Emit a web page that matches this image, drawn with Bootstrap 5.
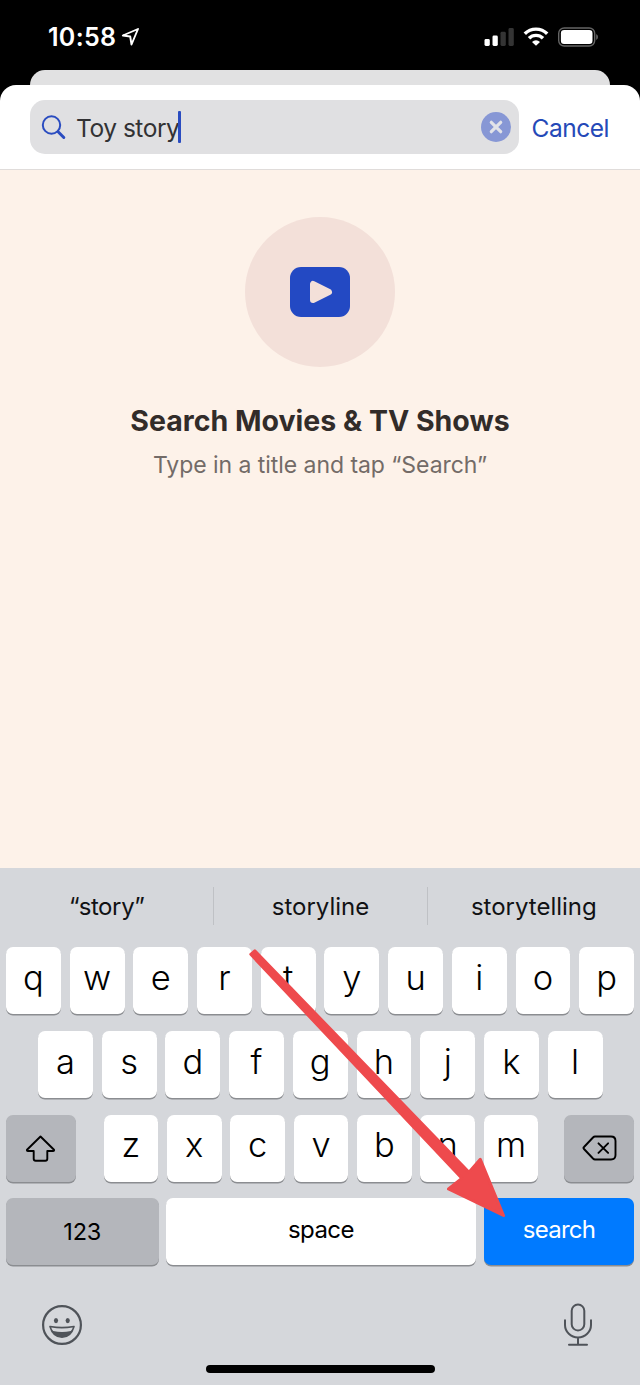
<!DOCTYPE html>
<html lang="en">
<head>
<meta charset="utf-8">
<meta name="viewport" content="width=device-width, initial-scale=1">
<title>Search Movies &amp; TV Shows</title>
<link href="https://cdn.jsdelivr.net/npm/bootstrap@5.3.0/dist/css/bootstrap.min.css" rel="stylesheet">
<style>
body{font-family:Inter,"Liberation Sans",sans-serif;background:#000;color:#000;line-height:1.2}
svg{display:block;flex:none}
.phone{width:640px;height:1385px;overflow:hidden}
.statusbar{height:70px;padding:3px 42px 0 48px}
.clock{font-size:25px;font-weight:600;letter-spacing:.3px}
.sheet-back{height:30px;margin:0 30px;background:#e1e1e2;border-radius:15px 15px 0 0}
.sheet{margin-top:-15px;background:#fff;border-radius:16px 16px 0 0;height:84px;padding:15px 31px 15px 30px;position:relative}
.field{width:489px;background:#e0e0e2;border-radius:15px;padding:0 8px 0 11px}
.query{font-size:24.5px;color:#323234;margin-left:10px;letter-spacing:-.47px;padding-top:3px}
.caret{width:3px;height:32px;background:#2a4cc0;border-radius:1px;margin-left:-1px}
.cancel{font-size:24.5px;color:#2549b8;letter-spacing:-.48px;padding-top:3px}
.empty{background:#fdf2e9;border-top:1px solid #e0dcda;height:699px;padding-top:47px}
.disc{width:150px;height:150px;background:#f3e0d9}
.title{font-size:28.5px;font-weight:700;color:#322c29;margin-top:37px}
.subtitle{font-size:23px;color:#736b67;margin-top:14px;letter-spacing:-.05px}
.keyboard{background:#d5d7db;height:517px}
.suggest{height:79px;padding-bottom:3px;font-size:24px;color:#111214}
.suggest>div{height:38px;padding-top:2px}
.suggest>div+div{border-left:1.5px solid #bfc1c5}
.tight{letter-spacing:-.4px}
.keys{gap:8.8px;height:68px;margin-bottom:15.8px;padding:0 6px}
.keys-inset{padding:0 37.5px 0 38px}
.keys-last{gap:8px}
.key{flex:1 1 0;min-width:0;background:#fff;border-radius:7px;box-shadow:0 1.5px 0 #8b8d91;font-size:34.5px;font-weight:350;padding-bottom:6px;height:67px;display:flex;align-items:center;justify-content:center}
.key-side{flex:0 0 69.6px}
.key-shift{margin-right:19.2px}
.key-del{margin-left:17.2px}
.key-dark{background:#b4b6bb;padding:0}
.key-word{font-size:24px;font-weight:400;padding-bottom:3px;letter-spacing:-.6px}
.key-num{flex:0 0 152.5px;font-size:23.5px;padding:0;letter-spacing:-.2px;margin-right:-.7px}
.key-go{flex:0 0 150px;background:#007aff;color:#fff;letter-spacing:-.75px}
.toolrow{padding:0 47px 0 41px;margin-top:37px}
.homebar{width:229px;height:8px;background:#000;margin-top:18px}
.pointer{left:240px;top:940px}
</style>
</head>
<body>
<div class="phone position-relative">
  <div class="statusbar d-flex align-items-center">
    <span class="clock text-white">10:58</span>
    <svg class="ms-1" width="22" height="20" viewBox="0 0 22 20" fill="none" stroke="#fff" stroke-width="1.9" stroke-linejoin="round"><path d="M18 2 2.800 8.500l7.400 1L11.500 17.500Z"/></svg>
    <svg class="ms-auto" width="116" height="20" viewBox="0 0 116 20"><g fill="#fff"><rect x="2.500" y="12" width="5.300" height="7" rx="1.400"/><rect x="10.500" y="8.600" width="5.300" height="10.400" rx="1.400"/><g fill="#343434"><rect x="18.500" y="4.800" width="5.300" height="14.200" rx="1.400"/><rect x="26.500" y="1" width="5.300" height="18" rx="1.400"/></g></g><g fill="none" stroke="#fff" stroke-width="3.400"><path d="M42.800 6.800a15.700 15.700 0 0 1 22.400 0M47 11.300a9.800 9.800 0 0 1 14 0"/></g><path d="M50 14.900a5.800 5.800 0 0 1 8 0L54 18.800Z" fill="#fff"/><rect x="76.700" y="1" width="36" height="18" rx="5.500" fill="none" stroke="#646464" stroke-width="1.400"/><rect x="78.900" y="3.100" width="31.600" height="13.800" rx="3.200" fill="#fff"/><path d="M114.200 7q1.800.8 1.800 3t-1.800 3Z" fill="#646464"/></svg>
  </div>
  <div class="sheet-back"></div>
  <div class="sheet d-flex justify-content-between">
    <div class="field d-flex align-items-center">
      <svg width="25" height="25" viewBox="0 0 25 25" fill="none" stroke="#2a4cc0" stroke-linecap="round"><circle cx="10.500" cy="10" r="8.700" stroke-width="2"/><path d="m17.100 16.800 5.700 5.700" stroke-width="3"/></svg>
      <span class="query">Toy story</span><span class="caret"></span>
      <svg class="ms-auto" width="30" height="30" viewBox="0 0 30 30"><circle cx="15" cy="15" r="15" fill="#8797d5"/><path d="m10.300 10.300 9.400 9.400m0-9.400-9.400 9.400" stroke="#e2e3e8" stroke-width="3.200" stroke-linecap="round"/></svg>
    </div>
    <span class="cancel align-self-center">Cancel</span>
  </div>
  <main class="empty d-flex flex-column align-items-center">
    <div class="disc rounded-circle d-flex align-items-center justify-content-center">
      <svg width="60" height="50" viewBox="0 0 60 50"><rect width="60" height="50" rx="11" fill="#2349c3"/><path d="M23 17v16L39 25Z" fill="#f3e0d9" stroke="#f3e0d9" stroke-width="6" stroke-linejoin="round"/></svg>
    </div>
    <div class="title">Search Movies &amp; TV Shows</div>
    <div class="subtitle">Type in a title and tap “Search”</div>
  </main>
  <div class="keyboard">
    <div class="suggest d-flex align-items-center">
      <div class="col-4 d-flex align-items-center justify-content-center tight">“story”</div>
      <div class="col-4 d-flex align-items-center justify-content-center">storyline</div>
      <div class="col-4 d-flex align-items-center justify-content-center">storytelling</div>
    </div>
    <div class="keys d-flex">
      <div class="key">q</div><div class="key">w</div><div class="key">e</div><div class="key">r</div><div class="key">t</div><div class="key">y</div><div class="key">u</div><div class="key">i</div><div class="key">o</div><div class="key">p</div>
    </div>
    <div class="keys keys-inset d-flex">
      <div class="key">a</div><div class="key">s</div><div class="key">d</div><div class="key">f</div><div class="key">g</div><div class="key">h</div><div class="key">j</div><div class="key">k</div><div class="key">l</div>
    </div>
    <div class="keys d-flex">
      <div class="key key-side key-dark key-shift"><svg width="32" height="30" viewBox="0 0 32 30" fill="none" stroke="#000" stroke-width="1.900" stroke-linejoin="round"><path d="M15.500 3.500 29 16.700q.5 1.300-1 1.300h-5.700v7.700q0 2-2 2h-9.600q-2 0-2-2v-7.700H3q-1.500 0-1-1.300Z"/></svg></div>
      <div class="key">z</div><div class="key">x</div><div class="key">c</div><div class="key">v</div><div class="key">b</div><div class="key">n</div><div class="key">m</div>
      <div class="key key-side key-dark key-del"><svg width="35" height="26" viewBox="0 0 35 26" fill="none" stroke="#000" stroke-width="1.900" stroke-linejoin="round" stroke-linecap="round"><path d="M13 1.500h16q4.500 0 4.500 4.500v14q0 4.500-4.500 4.500H13q-1 0-2-1L2 14q-1-1 0-2l9-9.500q1-1 2-1ZM16.500 8.300l9.600 9.600m0-9.600-9.600 9.600"/></svg></div>
    </div>
    <div class="keys keys-last d-flex">
      <div class="key key-word key-dark key-num">123</div><div class="key key-word">space</div><div class="key key-word key-go">search</div>
    </div>
    <div class="toolrow d-flex justify-content-between align-items-center">
      <svg width="42" height="42" viewBox="0 0 42 42"><circle cx="21" cy="21" r="18.900" fill="none" stroke="#4f5359" stroke-width="2.200"/><ellipse cx="15" cy="16.600" rx="2.100" ry="2.600" fill="#4f5359"/><ellipse cx="26.700" cy="16.600" rx="2.100" ry="2.600" fill="#4f5359"/><path d="M8.300 23q-.6-1.500 1-1.200 11.700 2 23.400 0 1.600-.3 1 1.200Q30.500 34 21 34T8.300 23Z" fill="#4f5359"/><path d="M10.200 23.500q10.800 2.200 21.600 0-.7 2-2 3.600-8.800 1.800-17.600 0-1.300-1.600-2-3.600Z" fill="#d5d7db"/></svg>
      <svg width="30" height="44" viewBox="0 0 30 44" fill="none" stroke="#4f5359" stroke-width="2" stroke-linecap="round"><rect x="8.700" y="1.500" width="12.600" height="26" rx="6.300"/><path d="M2 17.300v4.700a13 12.500 0 0 0 26 0v-4.700M15 34.500v7.300M6 41.800h18"/></svg>
    </div>
    <div class="homebar rounded-pill mx-auto"></div>
  </div>
  <svg class="pointer position-absolute" width="272" height="284" viewBox="240 940 272 284" fill="#ee4a4d" stroke="#ee4a4d" stroke-width="3" stroke-linejoin="round"><path d="M250.800 954.300 254.800 950.800 469 1172.300 480.300 1159.300 503.500 1215.500 448.500 1189 461.800 1178.300Z"/></svg>
</div>
</body>
</html>
